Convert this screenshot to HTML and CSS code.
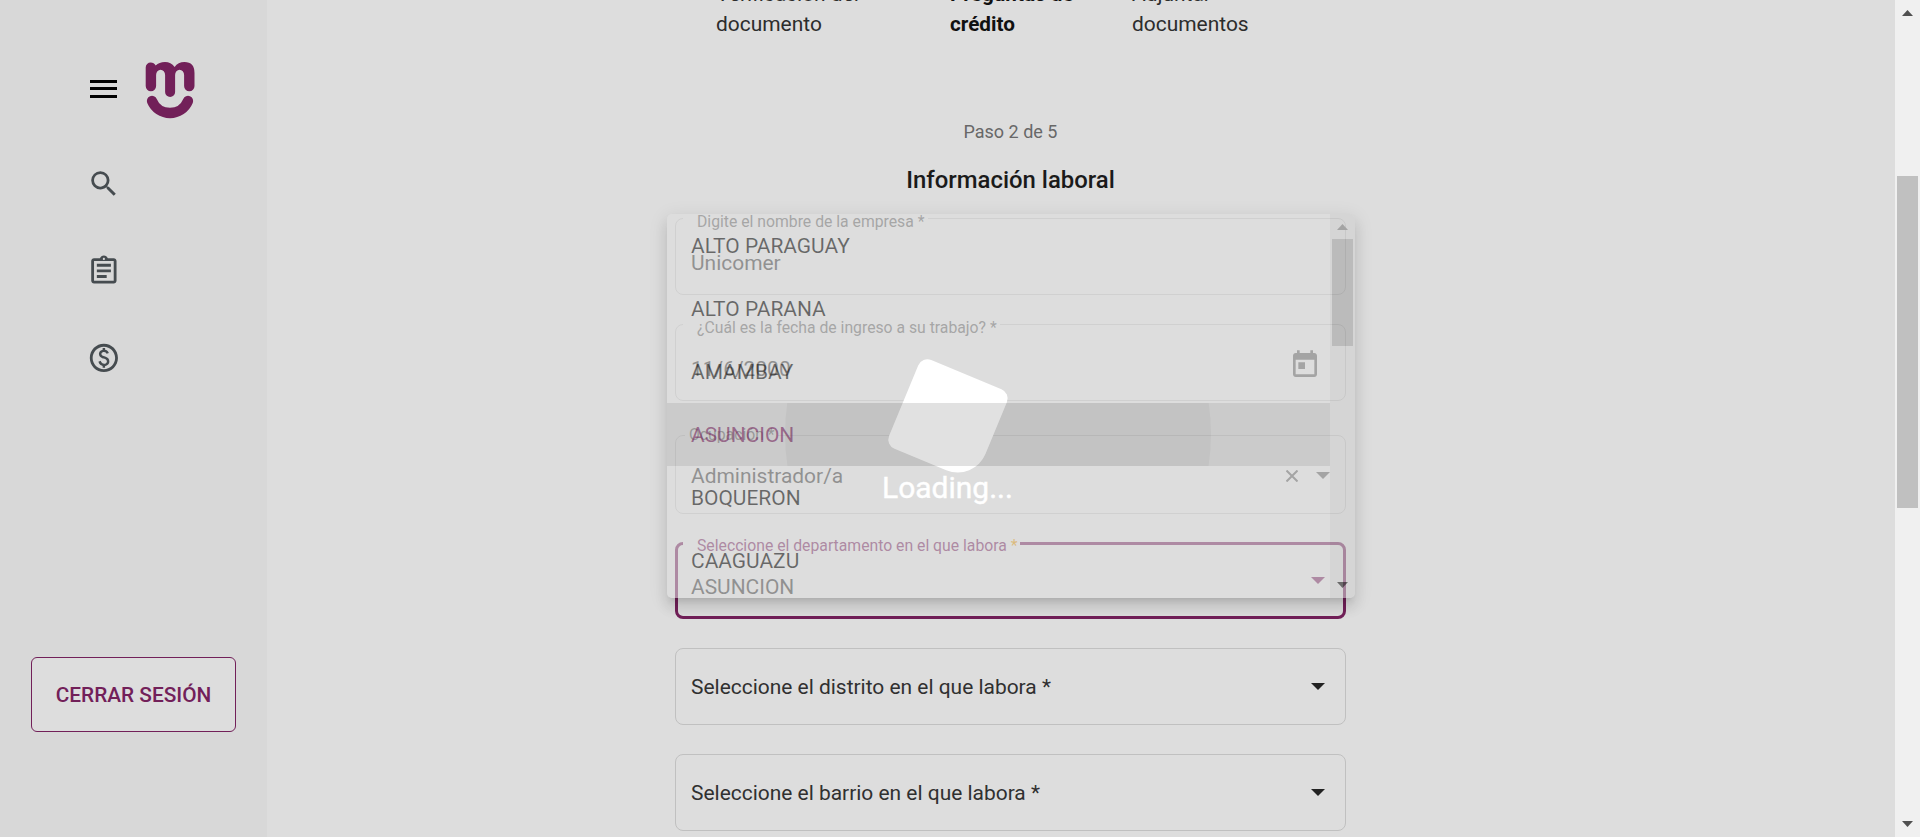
FILE: index.html
```html
<!DOCTYPE html>
<html lang="es">
<head>
<meta charset="utf-8">
<title>Información laboral</title>
<link rel="stylesheet" href="styles.css">
</head>
<body>
<div class="app">
  <aside class="sidebar">
    <div class="brand">
      <svg class="menu-icon" viewBox="0 0 27 18"><path d="M0 0h27v3H0zM0 7h27v3H0zM0 15h27v3H0z"/></svg>
      <svg class="logo" viewBox="145 61 50 58">
        <path d="M145.7 67.5a5 5 0 0 1 5-5q3.4 0 5 3Q159 62 165 62q6 0 9.6 5Q178 62 184.5 62q10 0 10 11v13a5.2 5.2 0 0 1-10.4 0V75a4.5 5.3 0 0 0-9 0v17a5 5 0 0 1-10 0V75a4.5 5.3 0 0 0-9 0v11a5.2 5.2 0 0 1-10.4 0z"/>
        <path class="smile" d="M152 101a19.5 19.5 0 0 0 36 0"/>
      </svg>
    </div>
    <nav class="nav">
      <svg viewBox="0 0 24 24"><path d="M15.5 14h-.79l-.28-.27A6.47 6.47 0 0 0 16 9.5 6.5 6.5 0 1 0 9.5 16c1.61 0 3.09-.59 4.23-1.57l.27.28v.79l5 4.99L20.49 19l-4.99-5zm-6 0C7.01 14 5 11.99 5 9.5S7.01 5 9.5 5 14 7.01 14 9.5 11.99 14 9.5 14z"/></svg>
      <svg viewBox="0 0 24 24"><path d="M7 15h7v2H7zm0-4h10v2H7zm0-4h10v2H7zm12-4h-4.18C14.4 1.84 13.3 1 12 1s-2.4.84-2.82 2H5c-1.1 0-2 .9-2 2v14c0 1.1.9 2 2 2h14c1.1 0 2-.9 2-2V5c0-1.1-.9-2-2-2zm-7-.25c.41 0 .75.34.75.75s-.34.75-.75.75-.75-.34-.75-.75.34-.75.75-.75zM19 19H5V5h14v14z"/></svg>
      <svg viewBox="0 0 24 24"><path d="M12 2C6.48 2 2 6.48 2 12s4.48 10 10 10 10-4.48 10-10S17.52 2 12 2zm0 18c-4.41 0-8-3.59-8-8s3.59-8 8-8 8 3.59 8 8-3.59 8-8 8zm.89-8.9c-1.78-.59-2.64-.96-2.64-1.9 0-1.02 1.11-1.39 1.81-1.39 1.31 0 1.79.99 1.9 1.34l1.58-.67c-.15-.44-.82-1.91-2.66-2.23V5h-1.75v1.26c-2.6.56-2.62 2.85-2.62 2.96 0 2.27 2.25 2.91 3.35 3.31 1.58.56 2.28 1.07 2.28 2.03 0 1.13-1.05 1.61-1.98 1.61-1.82 0-2.34-1.87-2.4-2.09l-1.66.67c.63 2.19 2.28 2.78 3.02 2.96V19h1.75v-1.24c.52-.09 3.02-.59 3.02-3.22.01-1.39-.6-2.61-3-3.44z"/></svg>
    </nav>
    <button class="logout">CERRAR SESIÓN</button>
  </aside>

  <main class="content">
    <div class="steps">
      <div class="step">Verificación del<br>documento</div>
      <div class="step current">Preguntas de<br>crédito</div>
      <div class="step">Adjuntar<br>documentos</div>
    </div>
    <form class="form">
      <p class="progress">Paso 2 de 5</p>
      <h1 class="title">Información laboral</h1>
      <div class="field">
        <label class="float">Digite el nombre de la empresa *</label>
        <span class="value">Unicomer</span>
      </div>
      <div class="field date">
        <label class="float">¿Cuál es la fecha de ingreso a su trabajo? *</label>
        <span class="value">11/6/2000</span>
        <svg class="calendar" viewBox="0 0 24 24"><path d="M19 3h-1V1h-2v2H8V1H6v2H5c-1.11 0-1.99.9-1.99 2L3 19c0 1.1.89 2 2 2h14c1.1 0 2-.9 2-2V5c0-1.1-.9-2-2-2zm0 16H5V8h14v11zM7 10h5v5H7z"/></svg>
      </div>
      <div class="field occupation">
        <label class="float">Ocupación *</label>
        <span class="value">Administrador/a</span>
        <svg class="clear" viewBox="0 0 12 12"><path d="M0.5 0.5l11 11M11.5 0.5l-11 11"/></svg>
        <i class="arrow"></i>
      </div>
      <div class="field focused">
        <label class="float">Seleccione el departamento en el que labora <b>*</b></label>
        <span class="value">ASUNCION</span>
        <i class="arrow"></i>
      </div>
      <div class="field">
        <span class="value">Seleccione el distrito en el que labora *</span>
        <i class="arrow"></i>
      </div>
      <div class="field">
        <span class="value">Seleccione el barrio en el que labora *</span>
        <i class="arrow"></i>
      </div>
    </form>
  </main>

  <div class="scrollbar">
    <i class="tick up"></i>
    <i class="thumb"></i>
    <i class="tick down"></i>
  </div>
</div>

<div class="panel-back"></div>
<div class="loader"><i class="jelly"></i><span class="loading">Loading...</span></div>
<div class="panel">
  <div class="options">
    <div class="option">ALTO PARAGUAY</div>
    <div class="option">ALTO PARANA</div>
    <div class="option">AMAMBAY</div>
    <div class="option selected"><i class="ripple"></i>ASUNCION</div>
    <div class="option">BOQUERON</div>
    <div class="option">CAAGUAZU</div>
  </div>
  <div class="panel-scroll">
    <i class="tick up"></i>
    <i class="thumb"></i>
    <i class="tick down"></i>
  </div>
</div>
</body>
</html>
```
FILE: styles.css
```css
* { box-sizing: border-box; }
body {
  margin: 0;
  height: 837px;
  overflow: hidden;
  position: relative;
  background: #ddd;
  font: 400 20.95px/30px Roboto, sans-serif;
  color: #303030;
}
.app { display: flex; height: 837px; }

.sidebar {
  width: 267px;
  background: #d8d8d8;
  display: flex;
  flex-direction: column;
  padding-top: 61px;
}
.brand { display: flex; height: 58px; padding-left: 90px; }
.menu-icon { width: 27px; height: 18px; margin-top: 19px; shape-rendering: crispEdges; }
.logo { width: 50px; height: 58px; margin-left: 28px; fill: #722059; }
.smile { fill: none; stroke: #722059; stroke-width: 10.3; stroke-linecap: round; }
.nav {
  display: flex;
  flex-direction: column;
  gap: 53.25px;
  padding: 48px 0 0 86.7px;
}
.nav svg { width: 33.75px; height: 33.75px; fill: #464c50; }
.logout {
  width: 205px;
  height: 75px;
  margin: 282.5px 0 0 31px;
  padding: 0;
  border: 1px solid #722059;
  border-radius: 6px;
  background: #ddd;
  color: #722059;
  font: 500 20.8px/30px Roboto, sans-serif;
}

.content { flex: 1; height: 837px; overflow: hidden; }
.steps { display: flex; height: 60px; margin-top: -21px; padding-left: 449px; }
.step { width: 234px; color: #2c2c2c; }
.step.current { width: 182px; font-weight: 700; font-size: 20.7px; color: #111; }
.form { width: 671px; margin-left: 408px; }
.progress {
  margin: 78px 0 0;
  font-size: 18px;
  text-align: center;
  color: #686868;
}
.title {
  margin: 18px 0 23px;
  font-size: 23.9px;
  font-weight: 500;
  line-height: 30px;
  text-align: center;
  color: #1a1a1a;
}

.field {
  position: relative;
  display: flex;
  align-items: center;
  height: 77px;
  margin-bottom: 29px;
  padding-left: 15px;
  border: 1px solid #c0c0c0;
  border-radius: 8px;
}
.value { flex: 1; }
.float + .value { padding-top: 13px; }
.float {
  position: absolute;
  left: 7px;
  top: -7px;
  padding: 0 3px 0 14px;
  background: #ddd;
  font-size: 15.75px;
  line-height: 20px;
  color: #606060;
}
.float b { color: #d89000; font-weight: 400; }
.arrow {
  width: 14px;
  height: 7px;
  margin-right: 20px;
  background: #222;
  clip-path: polygon(0 0, 100% 0, 50% 100%);
}
.date { margin-bottom: 34px; }
.date .float + .value { padding-top: 12px; }
.calendar { width: 32px; height: 32px; fill: #5c5c5c; margin: 5px 24px 0 0; }
.occupation { height: 79px; margin-bottom: 28px; padding-top: 2px; }
.occupation .float + .value { padding-top: 1px; }
.occupation .float { left: 9px; top: -11px; padding-left: 4px; }
.occupation .arrow { margin-right: 15px; background: #5c5c5c; }
.clear { width: 12px; height: 12px; margin-right: 18px; stroke: #5c5c5c; stroke-width: 2; }
.focused { border: 3px solid #722059; padding-left: 13px; }
.focused .float { left: 5px; top: -9px; padding-right: 2px; color: #722059; }
.focused .arrow { background: #722059; margin-right: 18px; }

.scrollbar { width: 25px; background: #f0f0f0; display: flex; flex-direction: column; align-items: center; }
.tick { width: 11px; height: 6px; background: #505050; }
.up { clip-path: polygon(50% 0, 100% 100%, 0 100%); }
.down { clip-path: polygon(0 0, 100% 0, 50% 100%); margin-top: auto; }
.scrollbar .up { margin-top: 10px; }
.scrollbar .thumb { width: 21px; height: 332px; margin-top: 160px; background: #c0c0c0; }
.scrollbar .down { margin-bottom: 10px; }

/* Dropdown surface, with the loader between it and its options */
.panel-back, .panel {
  position: absolute;
  left: 667px;
  top: 214px;
  width: 688px;
  height: 384px;
  border-radius: 5px;
}
.panel-back {
  background: rgba(221, 221, 221, 0.56);
  box-shadow: 0 6px 6px -4px rgba(0,0,0,.12), 0 10px 13px 1px rgba(0,0,0,.08), 0 4px 18px 3px rgba(0,0,0,.07);
}
.panel { display: flex; overflow: hidden; }
.options { flex: 1; }
.option {
  position: relative;
  height: 63px;
  padding-left: 24px;
  line-height: 65px;
  color: rgba(0, 0, 0, 0.53);
}
.selected { background: rgba(0, 0, 0, 0.08); color: rgba(114, 32, 89, 0.58); overflow: hidden; }
.ripple {
  position: absolute;
  left: 118px;
  top: -182px;
  width: 426px;
  height: 426px;
  border-radius: 50%;
  background: rgba(0, 0, 0, 0.04);
}
.panel-scroll {
  width: 25px;
  display: flex;
  flex-direction: column;
  align-items: center;
  background: rgba(0, 0, 0, 0.035);
}
.panel-scroll .up { margin-top: 10px; background: #a4a4a4; }
.panel-scroll .thumb { width: 21px; height: 107px; margin-top: 9px; background: rgba(0,0,0,.12); }
.panel-scroll .down { margin-bottom: 10px; background: rgba(0,0,0,.5); }

.loader { position: absolute; left: 882px; top: 370.5px; width: 130px; color: #fff; }
.jelly {
  display: block;
  width: 96px;
  height: 96px;
  margin-left: 18px;
  border-radius: 10px 10px 30px 10px;
  background: #fff;
  transform: rotate(22.5deg);
}
.loading { display: block; margin-top: 3.5px; font-size: 30px; line-height: 36px; white-space: nowrap; -webkit-text-stroke: 0.4px #fff; }
```
